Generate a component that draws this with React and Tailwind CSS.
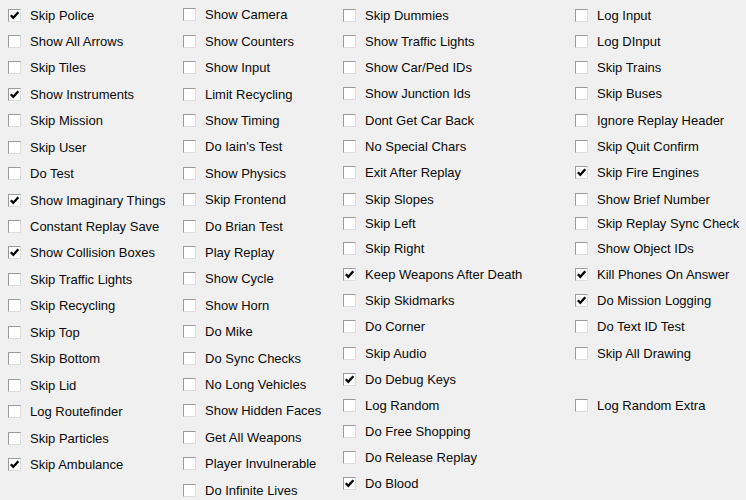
import React from "react";

const col1 = [
  ["Skip Police", true],
  ["Show All Arrows", false],
  ["Skip Tiles", false],
  ["Show Instruments", true],
  ["Skip Mission", false],
  ["Skip User", false],
  ["Do Test", false],
  ["Show Imaginary Things", true],
  ["Constant Replay Save", false],
  ["Show Collision Boxes", true],
  ["Skip Traffic Lights", false],
  ["Skip Recycling", false],
  ["Skip Top", false],
  ["Skip Bottom", false],
  ["Skip Lid", false],
  ["Log Routefinder", false],
  ["Skip Particles", false],
  ["Skip Ambulance", true],
];

const col2 = [
  ["Show Camera", false],
  ["Show Counters", false],
  ["Show Input", false],
  ["Limit Recycling", false],
  ["Show Timing", false],
  ["Do Iain's Test", false],
  ["Show Physics", false],
  ["Skip Frontend", false],
  ["Do Brian Test", false],
  ["Play Replay", false],
  ["Show Cycle", false],
  ["Show Horn", false],
  ["Do Mike", false],
  ["Do Sync Checks", false],
  ["No Long Vehicles", false],
  ["Show Hidden Faces", false],
  ["Get All Weapons", false],
  ["Player Invulnerable", false],
  ["Do Infinite Lives", false],
];

const col3 = [
  ["Skip Dummies", false],
  ["Show Traffic Lights", false],
  ["Show Car/Ped IDs", false],
  ["Show Junction Ids", false],
  ["Dont Get Car Back", false],
  ["No Special Chars", false],
  ["Exit After Replay", false],
  ["Skip Slopes", false],
  ["Skip Left", false],
  ["Skip Right", false],
  ["Keep Weapons After Death", true],
  ["Skip Skidmarks", false],
  ["Do Corner", false],
  ["Skip Audio", false],
  ["Do Debug Keys", true],
  ["Log Random", false],
  ["Do Free Shopping", false],
  ["Do Release Replay", false],
  ["Do Blood", true],
];

const col4 = [
  ["Log Input", false],
  ["Log DInput", false],
  ["Skip Trains", false],
  ["Skip Buses", false],
  ["Ignore Replay Header", false],
  ["Skip Quit Confirm", false],
  ["Skip Fire Engines", true],
  ["Show Brief Number", false],
  ["Skip Replay Sync Check", false],
  ["Show Object IDs", false],
  ["Kill Phones On Answer", true],
  ["Do Mission Logging", true],
  ["Do Text ID Test", false],
  ["Skip All Drawing", false],
  null,
  ["Log Random Extra", false],
];

const uniformMt = Array.from({ length: 19 }, (_, i) => (i === 0 ? "mt-0" : "mt-[6.45px]"));

const irregularMt = [
  "mt-0",
  "mt-[6.3px]",
  "mt-[6.3px]",
  "mt-[6.3px]",
  "mt-[6.3px]",
  "mt-[6.3px]",
  "mt-[6.3px]",
  "mt-[6.3px]",
  "mt-[4.6px]",
  "mt-[4.6px]",
  "mt-[6.2px]",
  "mt-[6.2px]",
  "mt-[6.2px]",
  "mt-[6.2px]",
  "mt-[6.2px]",
  "mt-[6.2px]",
  "mt-[6.2px]",
  "mt-[6.2px]",
  "mt-[6.2px]",
];

function Box({ checked }) {
  return (
    <span className="relative w-[13px] h-[13px] shrink-0 bg-white border border-t-[#9a9a9a] border-l-[#9a9a9a] border-b-[#dcdcdc] border-r-[#dcdcdc]">
      {checked && (
        <svg className="absolute left-0 top-0" width="11" height="11" viewBox="0 0 11 11">
          <path d="M1.8 5.2 L4.3 7.8 L9.3 2.3" fill="none" stroke="#000" strokeWidth="2.3" />
        </svg>
      )}
    </span>
  );
}

function Row({ item, mt }) {
  if (!item) return <div className={`h-5 ${mt}`} />;
  const [label, checked] = item;
  return (
    <div className={`h-5 flex items-center ${mt}`}>
      <Box checked={checked} />
      <span className="ml-[9px] whitespace-nowrap text-[13px] leading-[15px] text-[#0a0a0a]">{label}</span>
    </div>
  );
}

function Column({ items, mts, className }) {
  return (
    <div className={`flex flex-col shrink-0 ${className}`}>
      {items.map((it, i) => (
        <Row key={i} item={it} mt={mts[i]} />
      ))}
    </div>
  );
}

export default function App() {
  return (
    <div
      className="w-[746px] h-[500px] overflow-hidden bg-[#f0f0f0] flex pl-[8px] pt-[5px]"
      style={{ fontFamily: '"Liberation Sans", Arial, sans-serif' }}
    >
      <Column items={col1} mts={uniformMt} className="w-[175px]" />
      <Column items={col2} mts={uniformMt} className="w-[160px]" />
      <Column items={col3} mts={irregularMt} className="w-[232px]" />
      <Column items={col4} mts={irregularMt} className="w-[160px]" />
    </div>
  );
}
